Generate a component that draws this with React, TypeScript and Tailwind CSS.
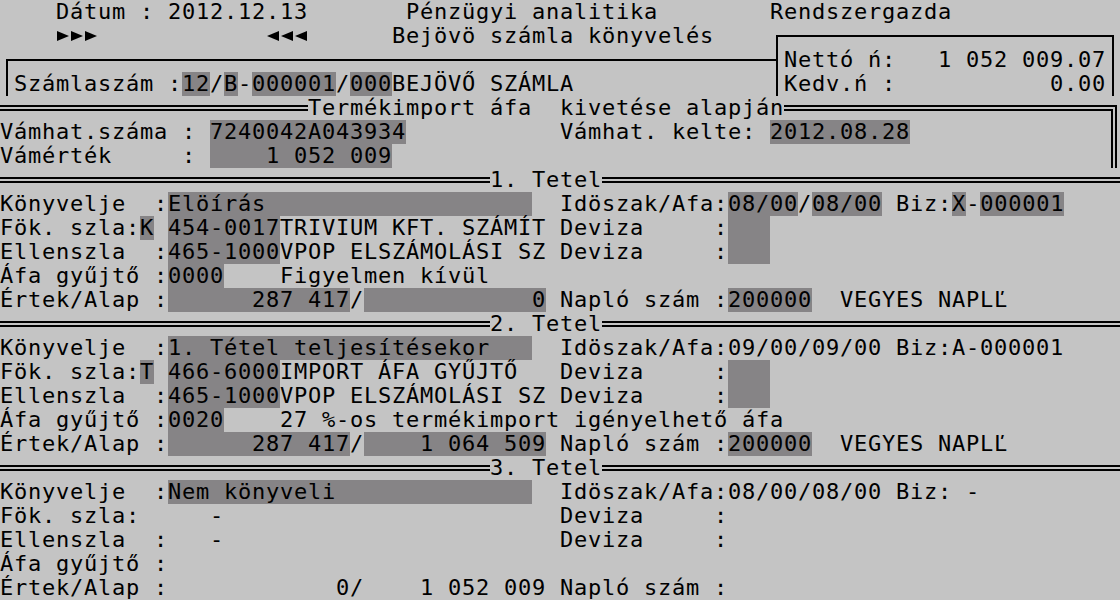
import { ReactNode } from "react";

// 80x25 text screen, each cell 14x24px
const pad = (s: string, n: number) => s.padEnd(n);

const Row = ({ children }: { children?: ReactNode }) => (
  <div className="flex h-[24px] whitespace-pre">{children}</div>
);

const Hl = ({ children }: { children: ReactNode }) => (
  <span className="bg-[#868486]">{children}</span>
);

const HLine = ({ className }: { className: string }) => (
  <span className={`flex flex-col justify-center ${className}`}>
    <span className="h-[2px] bg-black" />
  </span>
);

const DLine = ({ className }: { className: string }) => (
  <span className={`flex flex-col justify-center ${className}`}>
    <span className="h-[6px] border-y-2 border-black" />
  </span>
);

const CornerTL = () => (
  <span className="flex w-[14px] flex-col">
    <span className="h-[11px]" />
    <span className="ml-[6px] flex-1 border-l-2 border-t-2 border-black" />
  </span>
);

const CornerTR = () => (
  <span className="flex w-[14px] flex-col">
    <span className="h-[11px]" />
    <span className="mr-[6px] flex-1 border-r-2 border-t-2 border-black" />
  </span>
);

const TeeLeft = () => (
  <span className="flex w-[14px]">
    <span className="flex w-[6px] flex-col">
      <span className="h-[11px]" />
      <span className="h-[2px] bg-black" />
    </span>
    <span className="w-[2px] bg-black" />
  </span>
);

const VLine = () => (
  <span className="flex w-[14px] pl-[6px]">
    <span className="w-[2px] bg-black" />
  </span>
);

const DCornerTR = () => (
  <span className="flex w-[14px] flex-col">
    <span className="h-[9px]" />
    <span className="flex w-[11px] flex-1 flex-col border-r-2 border-t-2 border-black">
      <span className="h-[2px]" />
      <span className="w-[7px] flex-1 border-r-2 border-t-2 border-black" />
    </span>
  </span>
);

const DVLine = () => (
  <span className="flex w-[14px] pl-[5px]">
    <span className="w-[2px] bg-black" />
    <span className="ml-[2px] w-[2px] bg-black" />
  </span>
);

// small triangle arrows of the original screen
const Arrows = ({ dir }: { dir: "left" | "right" }) => (
  <span className="flex w-[42px]">
    {[0, 1, 2].map((i) => (
      <svg key={i} width="14" height="24" viewBox="0 0 14 24">
        {dir === "right" ? (
          <polygon points="1,7 13,12 1,17" fill="black" />
        ) : (
          <polygon points="13,7 1,12 13,17" fill="black" />
        )}
      </svg>
    ))}
  </span>
);

const TetelHeader = ({ n }: { n: number }) => (
  <Row>
    <DLine className="w-[490px]" />
    <span>{n}. Tetel</span>
    <DLine className="flex-1" />
  </Row>
);

type Tetel = {
  konyvelje: string;
  idoszak: ReactNode;
  fokJel?: string;
  fok?: string;
  fokNev?: string;
  ellen?: string;
  ellenNev?: string;
  afa?: string;
  afaNev?: string;
  ertek: string;
  alap: string;
  naplo?: string;
};

const TetelBlock = ({ t }: { t: Tetel }) => (
  <>
    <Row>
      <span>Könyvelje  :</span>
      <Hl>{pad(t.konyvelje, 26)}</Hl>
      <span>  Idöszak/Afa:</span>
      {t.idoszak}
    </Row>
    <Row>
      {t.fok ? (
        <>
          <span>Fök. szla:</span>
          <Hl>{t.fokJel}</Hl>
          <span> </span>
          <Hl>{t.fok}</Hl>
          <span>{pad(t.fokNev ?? "", 20)}</span>
        </>
      ) : (
        <span>{pad("Fök. szla:     -", 40)}</span>
      )}
      <span>Deviza     :</span>
      {t.fok && <Hl>{"   "}</Hl>}
    </Row>
    <Row>
      {t.ellen ? (
        <>
          <span>Ellenszla  :</span>
          <Hl>{t.ellen}</Hl>
          <span>{pad(t.ellenNev ?? "", 20)}</span>
        </>
      ) : (
        <span>{pad("Ellenszla  :   -", 40)}</span>
      )}
      <span>Deviza     :</span>
      {t.ellen && <Hl>{"   "}</Hl>}
    </Row>
    <Row>
      <span>Áfa gyűjtő :</span>
      {t.afa && <Hl>{t.afa}</Hl>}
      {t.afaNev && <span>{"    " + t.afaNev}</span>}
    </Row>
    <Row>
      <span>Értek/Alap :</span>
      {t.naplo ? (
        <>
          <Hl>{t.ertek.padStart(13)}</Hl>
          <span>/</span>
          <Hl>{t.alap.padStart(13)}</Hl>
          <span> Napló szám :</span>
          <Hl>{t.naplo}</Hl>
          <span>  VEGYES NAPLĽ</span>
        </>
      ) : (
        <span>{t.ertek.padStart(13) + "/" + t.alap.padStart(13) + " Napló szám :"}</span>
      )}
    </Row>
  </>
);

const tetelek: Tetel[] = [
  {
    konyvelje: "Elöírás",
    idoszak: (
      <>
        <Hl>08/00</Hl>
        <span>/</span>
        <Hl>08/00</Hl>
        <span> Biz:</span>
        <Hl>X</Hl>
        <span>-</span>
        <Hl>000001</Hl>
      </>
    ),
    fokJel: "K",
    fok: "454-0017",
    fokNev: "TRIVIUM KFT. SZÁMÍT",
    ellen: "465-1000",
    ellenNev: "VPOP ELSZÁMOLÁSI SZ",
    afa: "0000",
    afaNev: "Figyelmen kívül",
    ertek: "287 417",
    alap: "0",
    naplo: "200000",
  },
  {
    konyvelje: "1. Tétel teljesítésekor",
    idoszak: <span>09/00/09/00 Biz:A-000001</span>,
    fokJel: "T",
    fok: "466-6000",
    fokNev: "IMPORT ÁFA GYŰJTŐ",
    ellen: "465-1000",
    ellenNev: "VPOP ELSZÁMOLÁSI SZ",
    afa: "0020",
    afaNev: "27 %-os termékimport igényelhető áfa",
    ertek: "287 417",
    alap: "1 064 509",
    naplo: "200000",
  },
  {
    konyvelje: "Nem könyveli",
    idoszak: <span>08/00/08/00 Biz: -</span>,
    ertek: "0",
    alap: "1 052 009",
  },
];

export default function App() {
  return (
    <div className="h-[600px] w-[1120px] overflow-hidden bg-[#c4c4c4] font-['DejaVu_Sans_Mono',monospace] text-[22px] leading-[24px] tracking-[0.755px] text-black">
      <Row>
        <span>
          {pad("    Dátum : 2012.12.13", 29) + pad("Pénzügyi analitika", 26) + "Rendszergazda"}
        </span>
      </Row>
      <Row>
        <span>{"    "}</span>
        <Arrows dir="right" />
        <span>{pad("", 12)}</span>
        <Arrows dir="left" />
        <span>{pad("", 6) + pad("Bejövö számla könyvelés", 27)}</span>
        <CornerTL />
        <HLine className="w-[322px]" />
        <CornerTR />
      </Row>
      <Row>
        <CornerTL />
        <HLine className="w-[756px]" />
        <TeeLeft />
        <span>{pad("Nettó ń:", 11) + "1 052 009.07"}</span>
        <VLine />
      </Row>
      <Row>
        <VLine />
        <span>Számlaszám :</span>
        <Hl>12</Hl>
        <span>/</span>
        <Hl>B</Hl>
        <span>-</span>
        <Hl>000001</Hl>
        <span>/</span>
        <Hl>000</Hl>
        <span>{pad("BEJÖVŐ SZÁMLA", 27)}</span>
        <VLine />
        <span>{pad("Kedv.ń :", 19) + "0.00"}</span>
        <VLine />
      </Row>

      {/* Termékimport fejléc */}
      <Row>
        <DLine className="w-[308px]" />
        <span>Termékimport áfa  kivetése alapján</span>
        <DLine className="w-[322px]" />
        <DCornerTR />
      </Row>
      <Row>
        <span>Vámhat.száma : </span>
        <Hl>7240042A043934</Hl>
        <span>{pad("", 11) + "Vámhat. kelte: "}</span>
        <Hl>2012.08.28</Hl>
        <span className="flex-1" />
        <DVLine />
      </Row>
      <Row>
        <span>Vámérték     : </span>
        <Hl>{"1 052 009".padStart(13)}</Hl>
        <span className="flex-1" />
        <DVLine />
      </Row>

      {tetelek.map((t, i) => (
        <div key={i}>
          <TetelHeader n={i + 1} />
          <TetelBlock t={t} />
        </div>
      ))}
    </div>
  );
}
